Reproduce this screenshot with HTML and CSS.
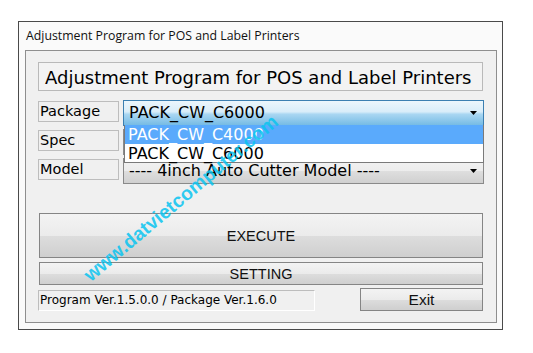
FILE: index.html
```html
<!DOCTYPE html>
<html lang="en">

<head>
    <meta charset="UTF-8">
    <meta name="viewport" content="width=device-width, initial-scale=1.0">
    <title>Adjustment Program</title>
    <link rel="stylesheet" href="styles.css">
</head>

<body>
    <div class="window">
        <div class="window__title">Adjustment Program for POS and Label Printers</div>
        <div class="panel">
            <div class="panel__heading">Adjustment Program for POS and Label Printers</div>

            <div class="fields">
                <div class="field">
                    <span class="field__label">Package</span>
                    <div class="combo combo--active">
                        <span>PACK_CW_C6000</span>
                        <svg class="combo__arrow" width="7" height="4" viewBox="0 0 7 4"><polygon points="0,0 7,0 3.5,4" /></svg>
                    </div>
                    <ul class="droplist">
                        <li class="droplist__item droplist__item--selected">PACK_CW_C4000</li>
                        <li class="droplist__item">PACK_CW_C6000</li>
                    </ul>
                </div>
                <div class="field">
                    <span class="field__label">Spec</span>
                    <div class="combo">
                        <span></span>
                        <svg class="combo__arrow" width="7" height="4" viewBox="0 0 7 4"><polygon points="0,0 7,0 3.5,4" /></svg>
                    </div>
                </div>
                <div class="field">
                    <span class="field__label">Model</span>
                    <div class="combo">
                        <span>---- 4inch Auto Cutter Model ----</span>
                        <svg class="combo__arrow" width="7" height="4" viewBox="0 0 7 4"><polygon points="0,0 7,0 3.5,4" /></svg>
                    </div>
                </div>
            </div>

            <button class="btn btn--execute" type="button">EXECUTE</button>
            <button class="btn btn--setting" type="button">SETTING</button>

            <div class="footer">
                <div class="footer__version">Program Ver.1.5.0.0 / Package Ver.1.6.0</div>
                <button class="btn btn--exit" type="button">Exit</button>
            </div>
        </div>

        <div class="watermark">www.datvietcomputer.com</div>
    </div>
</body>

</html>
```

FILE: styles.css
```css
* {
    margin: 0;
    padding: 0;
    box-sizing: border-box;
}

body {
    background: #fff;
    font-family: 'DejaVu Sans', Verdana, sans-serif;
    color: #000;
}

.window {
    position: relative;
    width: 485px;
    height: 309px;
    margin: 21px 0 0 18px;
    border: 1px solid #4a4a4a;
    background: #fafafa;
}

.window__title {
    height: 28px;
    line-height: 28px;
    padding-left: 7px;
    font-family: 'Open Sans', 'Liberation Sans', sans-serif;
    font-size: 12.3px;
    color: #111;
}

.panel {
    width: 472px;
    height: 273px;
    margin-left: 6px;
    padding: 11px 12px 11px 12px;
    border: 1px solid #8e8e8e;
    background: #f0f0f0;
}

.panel__heading {
    width: 445px;
    height: 29px;
    padding: 2px 0 0 6px;
    line-height: 25px;
    font-size: 18px;
    border: 1px solid #b9b9b9;
    background: #f3f3f3;
    white-space: nowrap;
}

.fields {
    display: grid;
    grid-template-rows: repeat(3, 26px);
    row-gap: 3px;
    margin-top: 9px;
}

.field {
    position: relative;
    display: grid;
    grid-template-columns: 81px 361px;
    column-gap: 4px;
    align-items: start;
}

.field__label {
    height: 21px;
    margin-top: 1px;
    padding-left: 1px;
    line-height: 19px;
    font-size: 14.5px;
    border: 1px solid #bdbdbd;
}

.combo {
    display: flex;
    align-items: center;
    justify-content: space-between;
    height: 26px;
    padding: 0 5px 0 5px;
    font-size: 16px;
    line-height: 24px;
    border: 1px solid #8a8a8a;
    background: linear-gradient(#f3f3f3 0%, #ececec 50%, #dedede 51%, #d0d0d0 100%);
    white-space: nowrap;
}

.combo--active {
    border-color: #3c7fb1;
    background: linear-gradient(#ecf6fc 0%, #d9edf9 45%, #a9d6f2 55%, #76bbe4 100%);
}

.combo__arrow {
    flex: none;
    margin-right: 1px;
    fill: #000;
}

.droplist {
    position: absolute;
    left: 86px;
    top: 25px;
    z-index: 2;
    width: 360px;
    list-style: none;
    border: 1px solid #7a7a7a;
    border-top: 0;
    background: #fff;
    font-size: 16px;
}

.droplist__item {
    height: 19px;
    line-height: 19px;
    padding-left: 3px;
    white-space: nowrap;
}

.droplist__item:last-child {
    height: 18px;
}

.droplist__item--selected {
    background: #5aaafc;
    color: #fff;
}

.btn {
    display: block;
    font-family: 'Liberation Sans', Arial, sans-serif;
    font-size: 14.5px;
    color: #111;
    border: 1px solid #858585;
    background: linear-gradient(#f3f3f3 0%, #ebebeb 50%, #dddddd 51%, #cfcfcf 100%);
    cursor: pointer;
}

.btn--execute {
    width: 444px;
    height: 45px;
    margin: 29px 0 0 1px;
}

.btn--setting {
    width: 444px;
    height: 23px;
    margin: 4px 0 0 1px;
}

.footer {
    display: flex;
    align-items: flex-end;
    height: 23px;
    margin-top: 3px;
}

.footer__version {
    width: 277px;
    height: 21px;
    padding-left: 1px;
    line-height: 19px;
    font-size: 12px;
    border: 1px solid;
    border-color: #bdbdbd #fff #fff #bdbdbd;
    white-space: nowrap;
}

.btn--exit {
    width: 123px;
    height: 23px;
    margin: 0 1px 0 auto;
    font-size: 15.5px;
}

.watermark {
    position: absolute;
    left: 162px;
    top: 176px;
    z-index: 3;
    transform: translate(-50%, -50%) rotate(-40deg);
    font-family: 'Liberation Sans', Arial, sans-serif;
    font-weight: bold;
    font-size: 19.5px;
    color: rgba(10, 196, 240, 0.85);
    white-space: nowrap;
    pointer-events: none;
}
```
